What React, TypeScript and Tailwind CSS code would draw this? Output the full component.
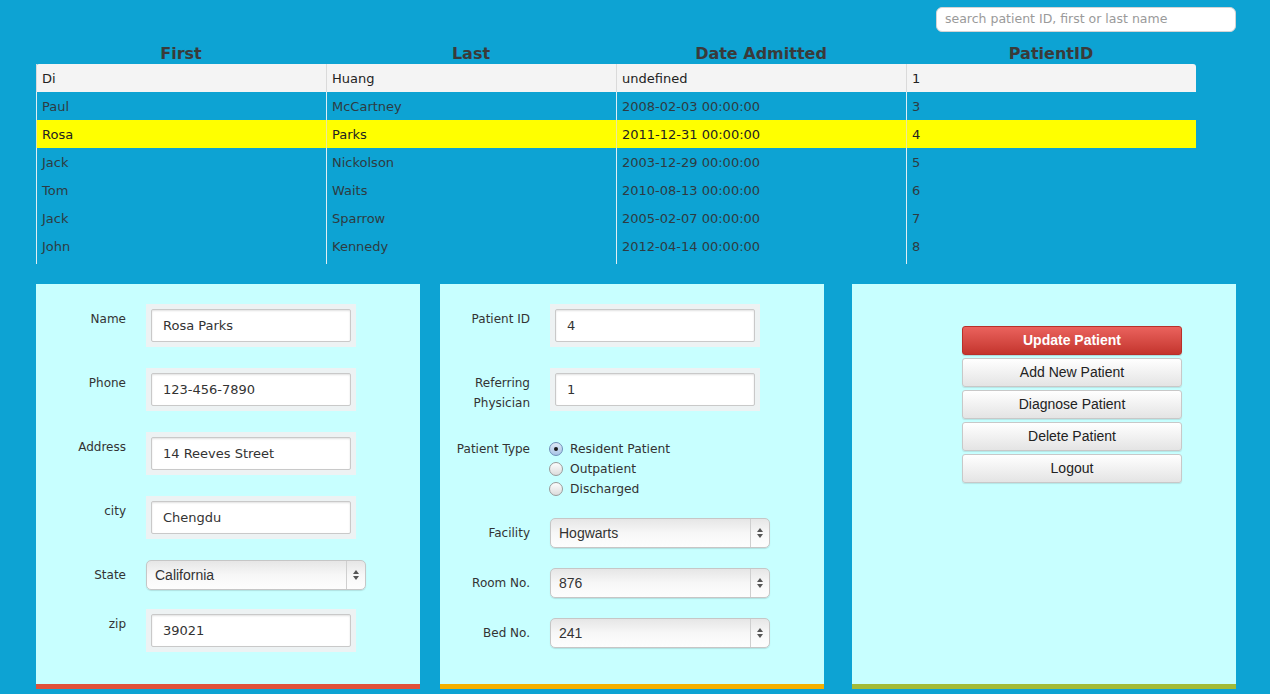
import React from "react";

const rows = [
  { f: "Di", l: "Huang", d: "undefined", id: "1", kind: "head" },
  { f: "Paul", l: "McCartney", d: "2008-02-03 00:00:00", id: "3", kind: "blue" },
  { f: "Rosa", l: "Parks", d: "2011-12-31 00:00:00", id: "4", kind: "sel" },
  { f: "Jack", l: "Nickolson", d: "2003-12-29 00:00:00", id: "5", kind: "blue" },
  { f: "Tom", l: "Waits", d: "2010-08-13 00:00:00", id: "6", kind: "blue" },
  { f: "Jack", l: "Sparrow", d: "2005-02-07 00:00:00", id: "7", kind: "blue" },
  { f: "John", l: "Kennedy", d: "2012-04-14 00:00:00", id: "8", kind: "blue" },
];

function Arrows() {
  return (
    <svg width="8" height="12" viewBox="0 0 8 12">
      <path d="M4 1 L7 5 L1 5 Z" fill="#555" />
      <path d="M4 11 L7 7 L1 7 Z" fill="#555" />
    </svg>
  );
}

function TextBox({ value }: { value: string }) {
  return (
    <div className="bg-[#edf2f3] p-[5px] w-[210px] h-[43px]">
      <div className="w-[200px] h-[33px] bg-white border border-[#c9c9c9] rounded-[2px] shadow-[inset_0_1px_2px_rgba(0,0,0,0.12)] flex items-center pl-[11px] text-[13px] text-[#333]">
        {value}
      </div>
    </div>
  );
}

function Select({ value }: { value: string }) {
  return (
    <div className="w-[220px] h-[30px] rounded-[5px] border border-[#c6c6c6] bg-gradient-to-b from-[#e6e6e6] via-[#f7f7f7] to-[#fdfdfd] shadow-[0_1px_1px_rgba(0,0,0,0.12)] flex items-stretch font-['Liberation_Sans',Arial,sans-serif] text-[14px] text-[#333]">
      <div className="flex-1 flex items-center pl-[8px]">{value}</div>
      <div className="w-[19px] border-l border-[#cfcfcf] flex items-center justify-center">
        <Arrows />
      </div>
    </div>
  );
}

function Label({ children, pt = "pt-[5px]" }: { children: React.ReactNode; pt?: string }) {
  return (
    <div className={`w-[90px] mr-[20px] text-right text-[12px] leading-[20px] text-[#333] ${pt}`}>{children}</div>
  );
}

function Radio({ checked, label }: { checked?: boolean; label: string }) {
  return (
    <div className="flex items-center h-[20px]">
      {checked ? (
        <div className="w-[14px] h-[14px] rounded-full border border-[#6f8fb8] bg-gradient-to-b from-[#dfeaf7] to-[#a9c4e6] flex items-center justify-center">
          <div className="w-[4px] h-[4px] rounded-full bg-[#1a1a1a]" />
        </div>
      ) : (
        <div className="w-[14px] h-[14px] rounded-full border border-[#9a9a9a] bg-gradient-to-b from-[#fdfdfd] to-[#dcdcdc]" />
      )}
      <span className="ml-[7px] text-[12.3px] text-[#333]">{label}</span>
    </div>
  );
}

function Button({ children, primary }: { children: React.ReactNode; primary?: boolean }) {
  return primary ? (
    <div className="w-[220px] h-[29px] rounded-[3px] border border-[#b8302a] bg-gradient-to-b from-[#ea625d] to-[#c4342d] text-white font-bold text-[14px] flex items-center justify-center shadow-[0_1px_1px_rgba(0,0,0,0.15)]">
      {children}
    </div>
  ) : (
    <div className="w-[220px] h-[29px] rounded-[3px] border border-[#c8c8c8] bg-gradient-to-b from-[#ffffff] to-[#e4e4e4] text-[#222] text-[14px] flex items-center justify-center shadow-[0_1px_1px_rgba(0,0,0,0.1)]">
      {children}
    </div>
  );
}

export default function App() {
  return (
    <div className="w-[1270px] h-[694px] bg-[#0da3d3] font-['DejaVu_Sans',sans-serif] overflow-hidden">
      <div className="flex justify-end pr-[34px] pt-[7px]">
        <div className="w-[300px] h-[25px] rounded-[6px] bg-white border border-[#d4d4d4] flex items-center pl-[8px] text-[12.5px] text-[#9a9a9a]">
          search patient ID, first or last name
        </div>
      </div>

      <div className="ml-[36px] w-[1160px] grid grid-cols-4 h-[32px] items-end">
        {["First", "Last", "Date Admitted", "PatientID"].map((h) => (
          <div key={h} className="text-center font-bold text-[16px] leading-[19px] pb-[1px] text-[#3a3a3a]">
            {h}
          </div>
        ))}
      </div>

      <div className="ml-[36px] w-[1160px]">
        {rows.map((r, i) => {
          const bg =
            r.kind === "head" ? "bg-[#f4f4f4] rounded-t-[3px]" : r.kind === "sel" ? "bg-[#ffff00]" : "";
          const line = r.kind === "head" ? "border-[#dadada]" : r.kind === "sel" ? "border-[#e8e8a0]" : "border-[#dfeef3]";
          return (
            <div key={i} className={`grid grid-cols-4 h-[28px] ${bg}`}>
              {[r.f, r.l, r.d, r.id].map((c, j) => (
                <div
                  key={j}
                  className={`flex items-center pl-[5px] pt-[2px] text-[13px] border-l ${line} ${r.kind === "blue" ? "text-[#2e3b42]" : "text-[#222]"}`}
                >
                  {c}
                </div>
              ))}
            </div>
          );
        })}
        <div className="grid grid-cols-4 h-[4px]">
          {[0, 1, 2, 3].map((j) => (
            <div key={j} className="border-l border-[#dfeef3]" />
          ))}
        </div>
      </div>

      <div className="flex ml-[36px] mt-[20px]">
        {/* Panel 1 */}
        <div className="w-[384px] h-[405px] bg-[#c8ffff] flex flex-col">
          <div className="flex-1 pt-[20px]">
            <div className="flex">
              <Label>Name</Label>
              <TextBox value="Rosa Parks" />
            </div>
            <div className="flex mt-[21px]">
              <Label>Phone</Label>
              <TextBox value="123-456-7890" />
            </div>
            <div className="flex mt-[21px]">
              <Label>Address</Label>
              <TextBox value="14 Reeves Street" />
            </div>
            <div className="flex mt-[21px]">
              <Label>city</Label>
              <TextBox value="Chengdu" />
            </div>
            <div className="flex items-center mt-[21px]">
              <Label pt="pt-0">State</Label>
              <Select value="California" />
            </div>
            <div className="flex mt-[19px]">
              <Label>zip</Label>
              <TextBox value="39021" />
            </div>
          </div>
          <div className="h-[5px] bg-[#e0523a]" />
        </div>

        {/* Panel 2 */}
        <div className="w-[384px] h-[405px] bg-[#c8ffff] flex flex-col ml-[20px]">
          <div className="flex-1 pt-[20px]">
            <div className="flex">
              <Label>Patient ID</Label>
              <TextBox value="4" />
            </div>
            <div className="flex mt-[21px]">
              <Label>
                Referring
                <br />
                Physician
              </Label>
              <TextBox value="1" />
            </div>
            <div className="flex mt-[26px]">
              <Label pt="pt-0">Patient Type</Label>
              <div className="-ml-[1px]">
                <Radio checked label="Resident Patient" />
                <Radio label="Outpatient" />
                <Radio label="Discharged" />
              </div>
            </div>
            <div className="flex items-center mt-[19px]">
              <Label pt="pt-0">Facility</Label>
              <Select value="Hogwarts" />
            </div>
            <div className="flex items-center mt-[20px]">
              <Label pt="pt-0">Room No.</Label>
              <Select value="876" />
            </div>
            <div className="flex items-center mt-[20px]">
              <Label pt="pt-0">Bed No.</Label>
              <Select value="241" />
            </div>
          </div>
          <div className="h-[5px] bg-[#f5b000]" />
        </div>

        {/* Panel 3 */}
        <div className="w-[384px] h-[405px] bg-[#c8ffff] flex flex-col ml-[28px]">
          <div className="flex-1 pt-[42px] pl-[110px] flex flex-col gap-[3px] font-['Liberation_Sans',Arial,sans-serif]">
            <Button primary>Update Patient</Button>
            <Button>Add New Patient</Button>
            <Button>Diagnose Patient</Button>
            <Button>Delete Patient</Button>
            <Button>Logout</Button>
          </div>
          <div className="h-[5px] bg-[#a3bb38]" />
        </div>
      </div>
    </div>
  );
}
